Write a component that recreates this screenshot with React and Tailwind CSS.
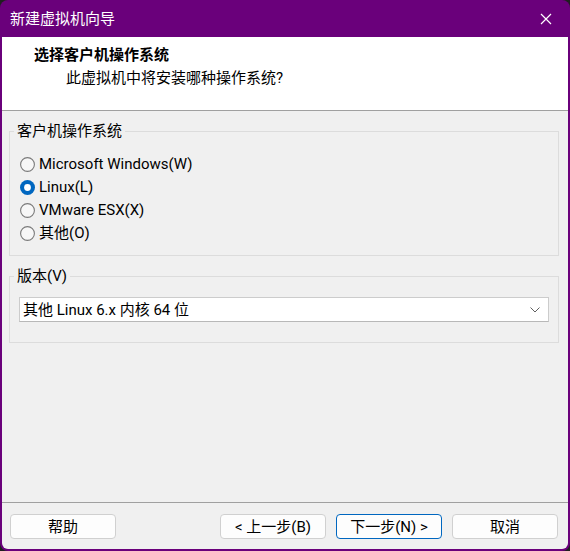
import React from "react";

const FONT = {
  fontFamily: 'Roboto, "Noto Sans CJK SC", sans-serif',
};

function Radio({ checked, label }) {
  return (
    <label className="flex h-[23px] items-center pt-[1px]">
      <svg width="15" height="15" viewBox="0 0 15 15" className="mr-[4px] h-[15px] w-[15px] shrink-0">
        {checked ? (
          <>
            <circle cx="7.5" cy="7.5" r="7.5" fill="#0067c0" />
            <circle cx="7.5" cy="7.5" r="3.4" fill="#ffffff" />
          </>
        ) : (
          <circle cx="7.5" cy="7.5" r="6.9" fill="#f7f7f7" stroke="#7a7a7a" strokeWidth="1.1" />
        )}
      </svg>
      <span className="text-[15px] leading-[20px] text-black">{label}</span>
    </label>
  );
}

function Button({ children, primary }) {
  return (
    <button
      className={
        "h-[25px] w-[106px] rounded-[4px] bg-[#fdfdfd] text-[15px] leading-[20px] text-black " +
        (primary ? "border border-[#0067c0]" : "border border-[#d0d0d0]")
      }
    >
      {children}
    </button>
  );
}

export default function App() {
  return (
    <div className="h-[551px] w-[570px] bg-[#1f1f1f]" style={FONT}>
      <div className="flex h-[551px] flex-col rounded-[8px] bg-[#6a007b] px-[2px] pb-[2px]">
        {/* title bar */}
        <div className="flex h-[37px] shrink-0 items-center justify-between pl-[8px] pr-[16px]">
          <span className="text-[15px] leading-[20px] text-white">新建虚拟机向导</span>
          <svg width="12" height="12" viewBox="0 0 12 12">
            <path d="M1 1 L11 11 M11 1 L1 11" stroke="#ffffff" strokeWidth="1.2" />
          </svg>
        </div>

        <div className="flex flex-1 flex-col rounded-b-[6px] bg-[#f0f0f0]">
          {/* header */}
          <div className="h-[74px] shrink-0 border-b border-[#a0a0a0] bg-white pl-[32px] pt-[8px]">
            <div className="text-[15px] font-bold leading-[20px] text-black">选择客户机操作系统</div>
            <div className="mt-[3px] pl-[32px] text-[15px] leading-[20px] text-black">
              此虚拟机中将安装哪种操作系统?
            </div>
          </div>

          {/* guest OS group */}
          <fieldset className="ml-[7px] mt-[10px] w-[550px] border border-[#dcdcdc]">
            <legend className="ml-[4px] px-[3px] text-[15px] leading-[20px] text-black">客户机操作系统</legend>
            <div className="mt-[11px] flex flex-col pb-[11px] pl-[10px]">
              <Radio label="Microsoft Windows(W)" />
              <Radio label="Linux(L)" checked />
              <Radio label="VMware ESX(X)" />
              <Radio label="其他(O)" />
            </div>
          </fieldset>

          {/* version group */}
          <fieldset className="ml-[7px] mt-[10px] w-[550px] border border-[#dcdcdc]">
            <legend className="ml-[4px] px-[3px] text-[15px] leading-[20px] text-black">版本(V)</legend>
            <div className="px-[9px] pb-[20px] pt-[11px]">
              <div className="flex h-[25px] items-center justify-between border border-[#cccccc] border-b-[#b8b8b8] bg-white pl-[3px] pr-[8px]">
                <span className="text-[15px] leading-[20px] text-black">其他 Linux 6.x 内核 64 位</span>
                <svg width="10" height="6" viewBox="0 0 10 6">
                  <path d="M0.5 0.5 L5 5 L9.5 0.5" fill="none" stroke="#606060" strokeWidth="1" />
                </svg>
              </div>
            </div>
          </fieldset>

          <div className="flex-1" />

          {/* footer buttons */}
          <div className="flex shrink-0 items-center border-t border-[#a0a0a0] pb-[10px] pl-[8px] pr-[10px] pt-[11px]">
            <Button>帮助</Button>
            <div className="flex-1" />
            <div className="flex gap-[10px]">
              <Button>&lt; 上一步(B)</Button>
              <Button primary>下一步(N) &gt;</Button>
              <Button>取消</Button>
            </div>
          </div>
        </div>
      </div>
    </div>
  );
}
